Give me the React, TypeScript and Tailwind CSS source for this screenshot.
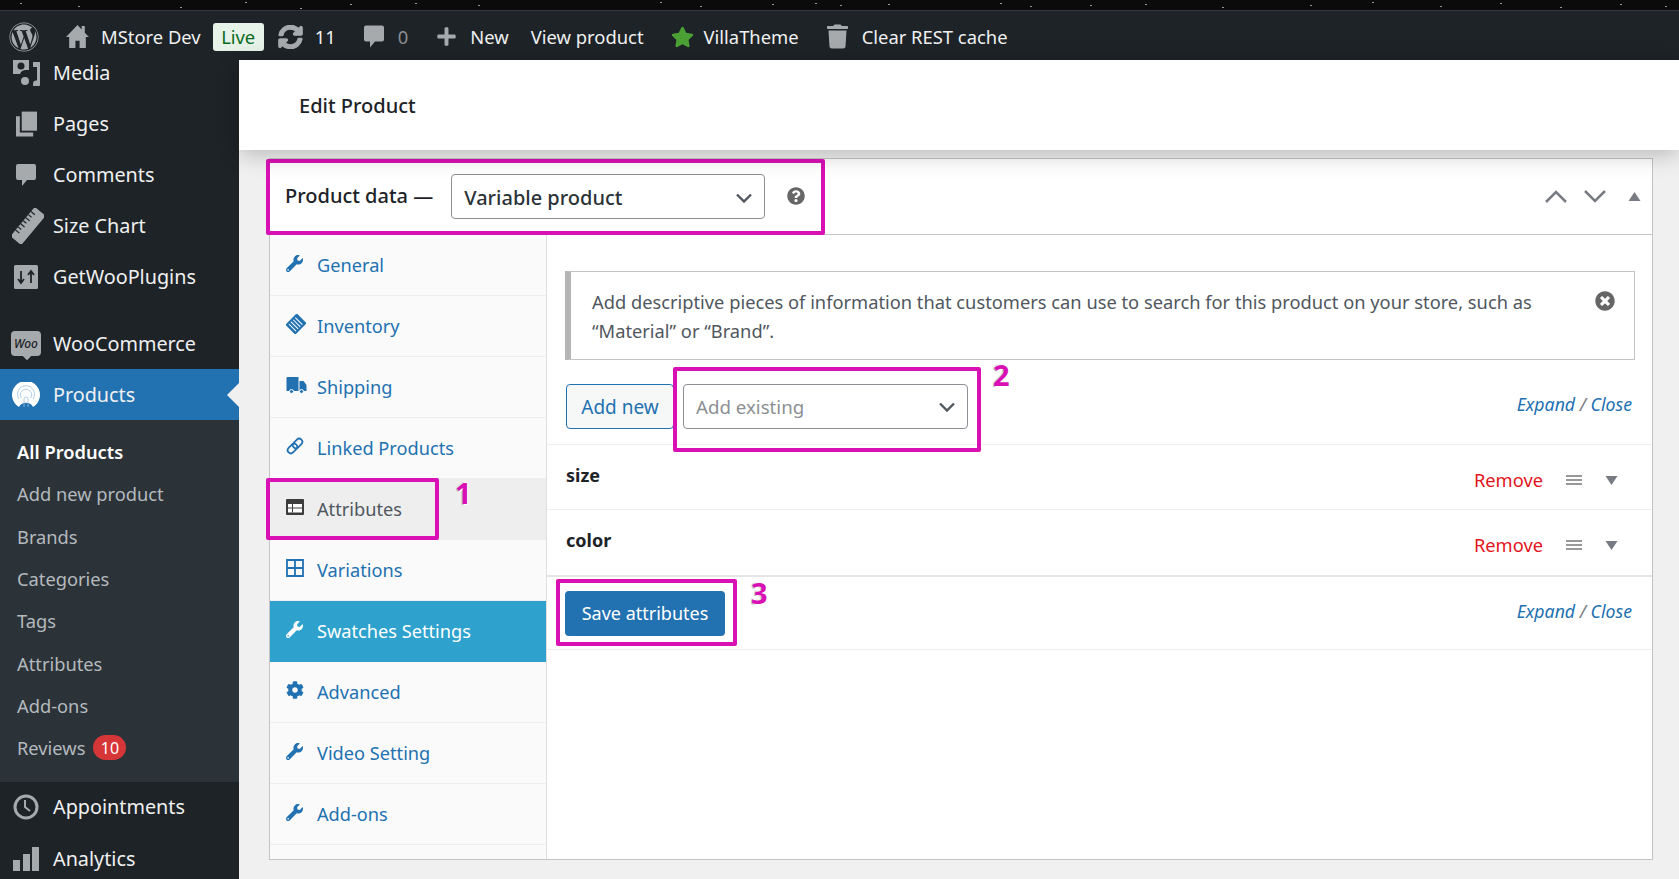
import React from "react";
import {
  FaCog,
  FaPlus,
  FaQuestionCircle,
  FaStar,
  FaSyncAlt,
  FaTimesCircle,
  FaTrash,
  FaWordpress,
  FaWrench,
} from "react-icons/fa";

const specks = [
  [20, 3], [78, 6], [180, 7], [245, 2], [300, 8], [350, 4], [415, 3], [478, 5], [660, 2], [700, 6], [772, 4],
  [815, 3], [840, 5], [888, 4], [1000, 3], [1030, 6], [1090, 5], [1145, 4], [1222, 7], [1310, 5], [1372, 2],
  [1440, 6], [1500, 3], [1560, 7], [1620, 4], [1665, 6],
];

const HomeIcon = () => (
  <svg viewBox="0 0 24 24" className="h-[27px] w-[25px] fill-[#a7aaad]">
    <path d="M12 1 1 12.5h3V23h6v-7h4v7h6V12.5h3l-4-4.2V2h-3v3.2z" />
  </svg>
);

const Bubble = ({ className }: { className: string }) => (
  <svg viewBox="0 0 22 24" className={className}>
    <path d="M3 1h16a2 2 0 0 1 2 2v12a2 2 0 0 1-2 2h-7l-5 6v-6H3a2 2 0 0 1-2-2V3a2 2 0 0 1 2-2z" />
  </svg>
);

const MediaIcon = () => (
  <svg viewBox="0 0 28 26" className="h-[26px] w-[28px] fill-[#a7aaad]">
    <path d="M1 0h16v10h-4a6 6 0 0 0-5 4H1z" />
    <circle cx="9" cy="6" r="3.5" fill="#1d2327" />
    <path d="M21 2h7v22a3.500 3.500 0 1 1-3-3.400V7h-4z" />
    <circle cx="13" cy="21" r="4" />
  </svg>
);

const PagesIcon = () => (
  <svg viewBox="0 0 22 26" className="h-[26px] w-[21px] fill-[#a7aaad]">
    <path d="M6 0h16v20H6z" />
    <path d="M0 5h4v17h14v4H0z" />
  </svg>
);

const RulerIcon = () => (
  <svg viewBox="0 0 32 36" className="ml-[3px] h-[36px] w-[32px]">
    <g transform="rotate(40 16 18)">
      <rect x="9" y="-1" width="14" height="38" rx="1.500" fill="#a7aaad" />
      <path d="M9 5h5M9 9h4M9 13h5M9 17h4M9 21h5M9 25h4M9 29h5" stroke="#1d2327" strokeWidth="1.200" />
    </g>
  </svg>
);

const PluginsIcon = () => (
  <svg viewBox="0 0 24 24" className="h-[24px] w-[24px]">
    <rect width="24" height="24" rx="1.500" fill="#a7aaad" />
    <path d="M7 6v12M4 14l3 4 3-4M17 18V6M14 10l3-4 3 4" stroke="#1d2327" strokeWidth="1.800" fill="none" />
  </svg>
);

const WooIcon = () => (
  <span className="relative flex h-[25px] w-[30px] items-center justify-center rounded-[4px] bg-[#a7aaad] text-[12px] font-medium italic leading-none text-[#1d2327]">
    Woo
    <span className="absolute -bottom-[3px] left-[13px] h-[6px] w-[6px] rotate-45 bg-[#a7aaad]" />
  </span>
);

const ProductsIcon = () => (
  <svg viewBox="0 0 30 26" className="h-[26px] w-[30px]">
    <path d="M8 25a14 14 0 1 1 14 0 8 8 0 0 0-14 0z" fill="#fff" />
    <path d="M8 17a8.500 8.500 0 1 1 14 0M10.500 16a5.500 5.500 0 1 1 9 0" fill="none" stroke="#9cc0dd" strokeWidth="0.800" />
    <path d="M13 25v-8a2 2 0 0 1 4 0v8" fill="none" stroke="#9cc0dd" strokeWidth="0.800" />
  </svg>
);

const ClockIcon = () => (
  <svg viewBox="0 0 26 26" className="h-[26px] w-[26px] fill-none stroke-[#a7aaad]">
    <circle cx="13" cy="13" r="11" strokeWidth="3" />
    <path d="M12 6v7l5 4" strokeWidth="2" />
  </svg>
);

const BarsIcon = () => (
  <svg viewBox="0 0 26 24" className="h-[24px] w-[26px] fill-[#a7aaad]">
    <path d="M0 13h7v11H0zM10 7h7v17h-7zM19 0h7v24h-7z" />
  </svg>
);

const InventoryIcon = () => (
  <svg viewBox="0 0 20 20" className="h-[20px] w-[20px]">
    <g transform="rotate(45 10 10)">
      <rect x="3" y="2" width="14" height="16" rx="1" fill="#2271b1" />
      <path d="M5 6h10M5 9h10M5 12h10M5 15h10" stroke="#fff" strokeWidth="1" />
    </g>
  </svg>
);

const TruckIcon = () => (
  <svg viewBox="0 0 20 17" className="h-[17px] w-[21px] fill-[#2271b1]">
    <path d="M0 1a1 1 0 0 1 1-1h11v14H0zM13 4h4l3 4v6h-7z" />
    <circle cx="5" cy="14.500" r="2" stroke="#fff" />
    <circle cx="15" cy="14.500" r="2" stroke="#fff" />
  </svg>
);

const LinkIcon = () => (
  <svg viewBox="0 0 20 20" className="h-[18px] w-[18px] fill-none stroke-[#2271b1]" strokeWidth="2">
    <g transform="rotate(-45 10 10)">
      <rect x="0" y="6.500" width="12" height="7" rx="3.500" />
      <rect x="8" y="6.500" width="12" height="7" rx="3.500" />
    </g>
  </svg>
);

const AttributesIcon = () => (
  <svg viewBox="0 0 18 16" className="h-[16px] w-[18px]">
    <rect width="18" height="16" rx="1" fill="#3c3c3c" />
    <rect x="2" y="5" width="14" height="8.500" fill="#fff" />
    <path d="M2 9h14" stroke="#3c3c3c" />
    <path d="M6.500 5v8.500" stroke="#3c3c3c" />
  </svg>
);

const GridIcon = () => (
  <svg viewBox="0 0 18 18" className="h-[18px] w-[18px] fill-none stroke-[#2271b1]" strokeWidth="1.800">
    <path d="M1 1h16v16H1zM9 1v16M1 9h16" />
  </svg>
);

const Chevron = () => (
  <svg viewBox="0 0 16 10" className="h-[10px] w-[16px] fill-none stroke-[#50575e]" strokeWidth="2.400">
    <path d="M1 1.500 8 8.500l7-7" />
  </svg>
);

const Triangle = ({ up }: { up?: boolean }) => (
  <svg viewBox="0 0 12 9" className="h-[9px] w-[13px] fill-[#787c82]">
    <path d={up ? "M6 0l6 9H0z" : "M0 0h12L6 9z"} />
  </svg>
);

const Handle = () => (
  <span className="flex w-[16px] flex-col gap-[2px]">
    <span className="h-[2px] bg-[#999]" />
    <span className="h-[2px] bg-[#999]" />
    <span className="h-[2px] bg-[#999]" />
  </span>
);

const Arrow = ({ up }: { up?: boolean }) => (
  <svg viewBox="0 0 22 13" className="h-[13px] w-[22px] fill-none stroke-[#787c82]" strokeWidth="2.500">
    <path d={up ? "M1 12 11 2l10 10" : "M1 1l10 10L21 1"} />
  </svg>
);

const topMenu = [
  { label: "Media", icon: <MediaIcon /> },
  { label: "Pages", icon: <PagesIcon /> },
  { label: "Comments", icon: <Bubble className="h-[24px] w-[22px] fill-[#a7aaad]" /> },
  { label: "Size Chart", icon: <RulerIcon /> },
  { label: "GetWooPlugins", icon: <PluginsIcon /> },
];

const subMenu = ["Add new product", "Brands", "Categories", "Tags", "Attributes", "Add-ons"];

const wrench = <FaWrench className="h-[17px] w-[17px] text-[#2271b1]" />;

const tabs = [
  { label: "General", icon: wrench },
  { label: "Inventory", icon: <InventoryIcon /> },
  { label: "Shipping", icon: <TruckIcon /> },
  { label: "Linked Products", icon: <LinkIcon /> },
  { label: "Attributes", icon: <AttributesIcon />, state: "hover" },
  { label: "Variations", icon: <GridIcon /> },
  { label: "Swatches Settings", icon: <FaWrench className="h-[17px] w-[17px] text-white" />, state: "active" },
  { label: "Advanced", icon: <FaCog className="h-[18px] w-[18px] text-[#2271b1]" /> },
  { label: "Video Setting", icon: wrench },
  { label: "Add-ons", icon: wrench },
];

const MenuRow = ({ label, icon }: { label: string; icon: React.ReactNode }) => (
  <div className="flex h-[51px] items-center text-[19.800px] text-[#f0f0f1]">
    <span className="flex w-[53px] shrink-0 justify-center pr-[1px]">{icon}</span>
    {label}
  </div>
);

const Mark = ({ className }: { className: string }) => (
  <div className={`pointer-events-none absolute rounded-[2px] border-[4px] border-[#d911b4] ${className}`} />
);

const Num = ({ n, className }: { n: string; className: string }) => (
  <span
    className={`absolute text-[29px] font-bold leading-none text-[#d911b4] [text-shadow:1px_1px_0_#fff,-1px_1px_0_#bbb,1px_-1px_0_#fff,-1px_-1px_0_#ddd] ${className}`}
  >
    {n}
  </span>
);

const AttributeRow = ({ name, last }: { name: string; last?: boolean }) => (
  <div className={`flex items-start justify-between pl-[19px] pr-[34px] ${last ? "h-[67px] border-b-2 border-[#e5e5e5]" : "h-[65px] border-b border-[#eee]"}`}>
    <b className="mt-[16px] text-[18px] font-bold leading-[28px] text-[#1d2327]">{name}</b>
    <div className="mt-[21px] flex items-center">
      <span className="text-[18.300px] leading-[28px] text-[#e2141c]">Remove</span>
      <span className="ml-[23px] mr-[23px]"><Handle /></span>
      <Triangle />
    </div>
  </div>
);

const ExpandClose = () => (
  <span className="text-[17.700px] italic text-[#2271b1]">
    Expand <span className="text-[#787c82]">/</span> Close
  </span>
);

export default function App() {
  return (
    <div className="relative flex h-[879px] w-[1679px] flex-col overflow-hidden bg-[#f0f0f1] font-['Noto_Sans',sans-serif]">
      <div className="relative h-[11px] shrink-0 border-b border-[#33373b] bg-[#0b0b0c]">
        {specks.map(([x, y]) => (
          <span key={x} className="absolute h-[1px] w-[2px] bg-[#9a9a9a]" style={{ left: x, top: y }} />
        ))}
      </div>

      <header className="flex h-[49px] shrink-0 items-center bg-[#1d2327] pt-[2px] text-[18.400px] text-[#f0f0f1]">
        <FaWordpress className="ml-[9px] h-[30px] w-[30px] text-[#a7aaad]" />
        <span className="ml-[26px]"><HomeIcon /></span>
        <span className="ml-[11px]">MStore Dev</span>
        <span className="ml-[12px] flex h-[28px] w-[51px] items-center justify-center rounded-[3px] bg-[#e7f3e9] text-[#0a6b1d]">Live</span>
        <FaSyncAlt className="ml-[13px] h-[24px] w-[27px] text-[#a7aaad]" strokeWidth={30} />
        <span className="ml-[11px]">11</span>
        <span className="ml-[27px]"><Bubble className="h-[25px] w-[22px] fill-[#a7aaad]" /></span>
        <span className="ml-[13px] text-[#8c8f94]">0</span>
        <FaPlus className="ml-[28px] h-[21px] w-[21px] text-[#a7aaad]" />
        <span className="ml-[13px]">New</span>
        <span className="ml-[22px]">View product</span>
        <FaStar className="ml-[27px] h-[22px] w-[23px] text-[#4ca135]" />
        <span className="ml-[10px]">VillaTheme</span>
        <FaTrash className="ml-[28px] h-[25px] w-[21px] text-[#a7aaad]" />
        <span className="ml-[14px]">Clear REST cache</span>
      </header>

      <div className="flex min-h-0 flex-1">
        <aside className="w-[239px] shrink-0 overflow-hidden bg-[#1d2327]">
          <div className="-mt-[13px]">
            {topMenu.map((m) => (
              <MenuRow key={m.label} {...m} />
            ))}
            <div className="mt-[16px]">
              <MenuRow label="WooCommerce" icon={<WooIcon />} />
            </div>
            <div className="relative bg-[#2271b1]">
              <MenuRow label="Products" icon={<ProductsIcon />} />
              <span className="absolute right-0 top-[14px] h-0 w-0 border-y-[12px] border-r-[12px] border-y-transparent border-r-[#f0f0f1]" />
            </div>
            <div className="bg-[#2c3338] pb-[13px] pt-[11px] text-[18.300px] text-[#b4b9be]">
              <div className="flex h-[42px] items-center pl-[17px] font-semibold text-white">All Products</div>
              {subMenu.map((s) => (
                <div key={s} className="flex h-[42.300px] items-center pl-[17px]">{s}</div>
              ))}
              <div className="flex h-[42px] items-center pl-[17px]">
                Reviews
                <span className="ml-[8px] flex h-[25px] w-[33px] items-center justify-center rounded-full bg-[#d63638] text-[16px] text-white">10</span>
              </div>
            </div>
            <MenuRow label="Appointments" icon={<ClockIcon />} />
            <div className="mt-[1px]">
              <MenuRow label="Analytics" icon={<BarsIcon />} />
            </div>
          </div>
        </aside>

        <main className="flex min-w-0 flex-1 flex-col">
          <div className="relative z-10 flex h-[90px] shrink-0 items-center bg-white pl-[60px] pt-[2px] text-[20px] font-medium text-[#1d2327] shadow-[0_4px_22px_rgba(0,0,0,0.24)]">
            Edit Product
          </div>

          <section className="ml-[30px] mr-[26px] mt-[8px] flex h-[702px] flex-col border border-[#c3c4c7] bg-white">
            <div className="flex h-[76px] shrink-0 items-center border-b border-[#c3c4c7] pl-[15px] pr-[11px]">
              <span className="mb-[2px] text-[20px] font-medium text-[#1d2327]">Product data —</span>
              <div className="ml-[18px] flex h-[45px] w-[314px] items-center justify-between rounded-[4px] border border-[#8c8f94] pl-[12px] pr-[12px] pt-[2px] text-[20px] font-medium text-[#2c3338]">
                Variable product
                <Chevron />
              </div>
              <FaQuestionCircle className="mb-[2px] ml-[22px] h-[18px] w-[18px] text-[#666]" />
              <div className="ml-auto flex items-center gap-[17px]">
                <Arrow up />
                <Arrow />
                <span className="ml-[5px]"><Triangle up /></span>
              </div>
            </div>

            <div className="flex min-h-0 flex-1">
              <nav className="w-[277px] shrink-0 border-r border-[#dfdfdf] bg-[#fafafa]">
                {tabs.map((t) => (
                  <div
                    key={t.label}
                    className={`flex h-[61px] items-center border-b pt-[2px] text-[18.200px] ${
                      t.state === "active"
                        ? "border-[#2ea2cc] bg-[#2ea2cc] text-white"
                        : t.state === "hover"
                          ? "border-[#eee] bg-[#eeeeee] text-[#50575e]"
                          : "border-[#eee] text-[#2271b1]"
                    }`}
                  >
                    <span className="mb-[6px] flex w-[47px] shrink-0 justify-start pl-[16px]">{t.icon}</span>
                    {t.label}
                  </div>
                ))}
              </nav>

              <div className="min-w-0 flex-1">
                <div className="ml-[18px] mr-[17px] mt-[36px] flex h-[89px] items-start justify-between border border-l-[6px] border-[#c3c4c7] border-l-[#b5b5b5] py-[15px] pl-[21px] pr-[19px] text-[18.300px] leading-[29px] text-[#50575e]">
                  <p>
                    Add descriptive pieces of information that customers can use to search for this product on your store, such as
                    <br />
                    “Material” or “Brand”.
                  </p>
                  <FaTimesCircle className="mt-[4px] h-[20px] w-[20px] shrink-0 text-[#666]" />
                </div>

                <div className="flex h-[85px] items-start justify-between border-b border-[#eee] pl-[19px] pr-[20px] pt-[24px]">
                  <div className="flex">
                    <div className="flex h-[45px] w-[108px] items-center justify-center rounded-[4px] border border-[#2271b1] bg-[#f6f7f7] pt-[2px] text-[19px] text-[#2271b1]">
                      Add new
                    </div>
                    <div className="ml-[9px] flex h-[45px] w-[285px] items-center justify-between rounded-[4px] border border-[#8c8f94] pl-[12px] pr-[12px] pt-[1px] text-[18.700px] text-[#8c8f94]">
                      Add existing
                      <Chevron />
                    </div>
                  </div>
                  <span className="mt-[7px]"><ExpandClose /></span>
                </div>

                <AttributeRow name="size" />
                <AttributeRow name="color" last />

                <div className="flex h-[73px] items-center justify-between border-b border-[#eee] pl-[18px] pr-[20px]">
                  <div className="flex h-[45px] w-[160px] items-center justify-center rounded-[4px] bg-[#2271b1] pt-[1px] text-[18px] text-white">
                    Save attributes
                  </div>
                  <span className="mb-[3px]"><ExpandClose /></span>
                </div>
              </div>
            </div>
          </section>
        </main>
      </div>

      <Mark className="left-[266px] top-[159px] h-[76px] w-[559px]" />
      <Mark className="left-[266px] top-[478px] h-[62px] w-[173px]" />
      <Mark className="left-[673px] top-[367px] h-[85px] w-[308px]" />
      <Mark className="left-[556px] top-[579px] h-[67px] w-[181px]" />
      <Num n="1" className="left-[455px] top-[478px]" />
      <Num n="2" className="left-[993px] top-[360px]" />
      <Num n="3" className="left-[751px] top-[578px]" />
    </div>
  );
}
